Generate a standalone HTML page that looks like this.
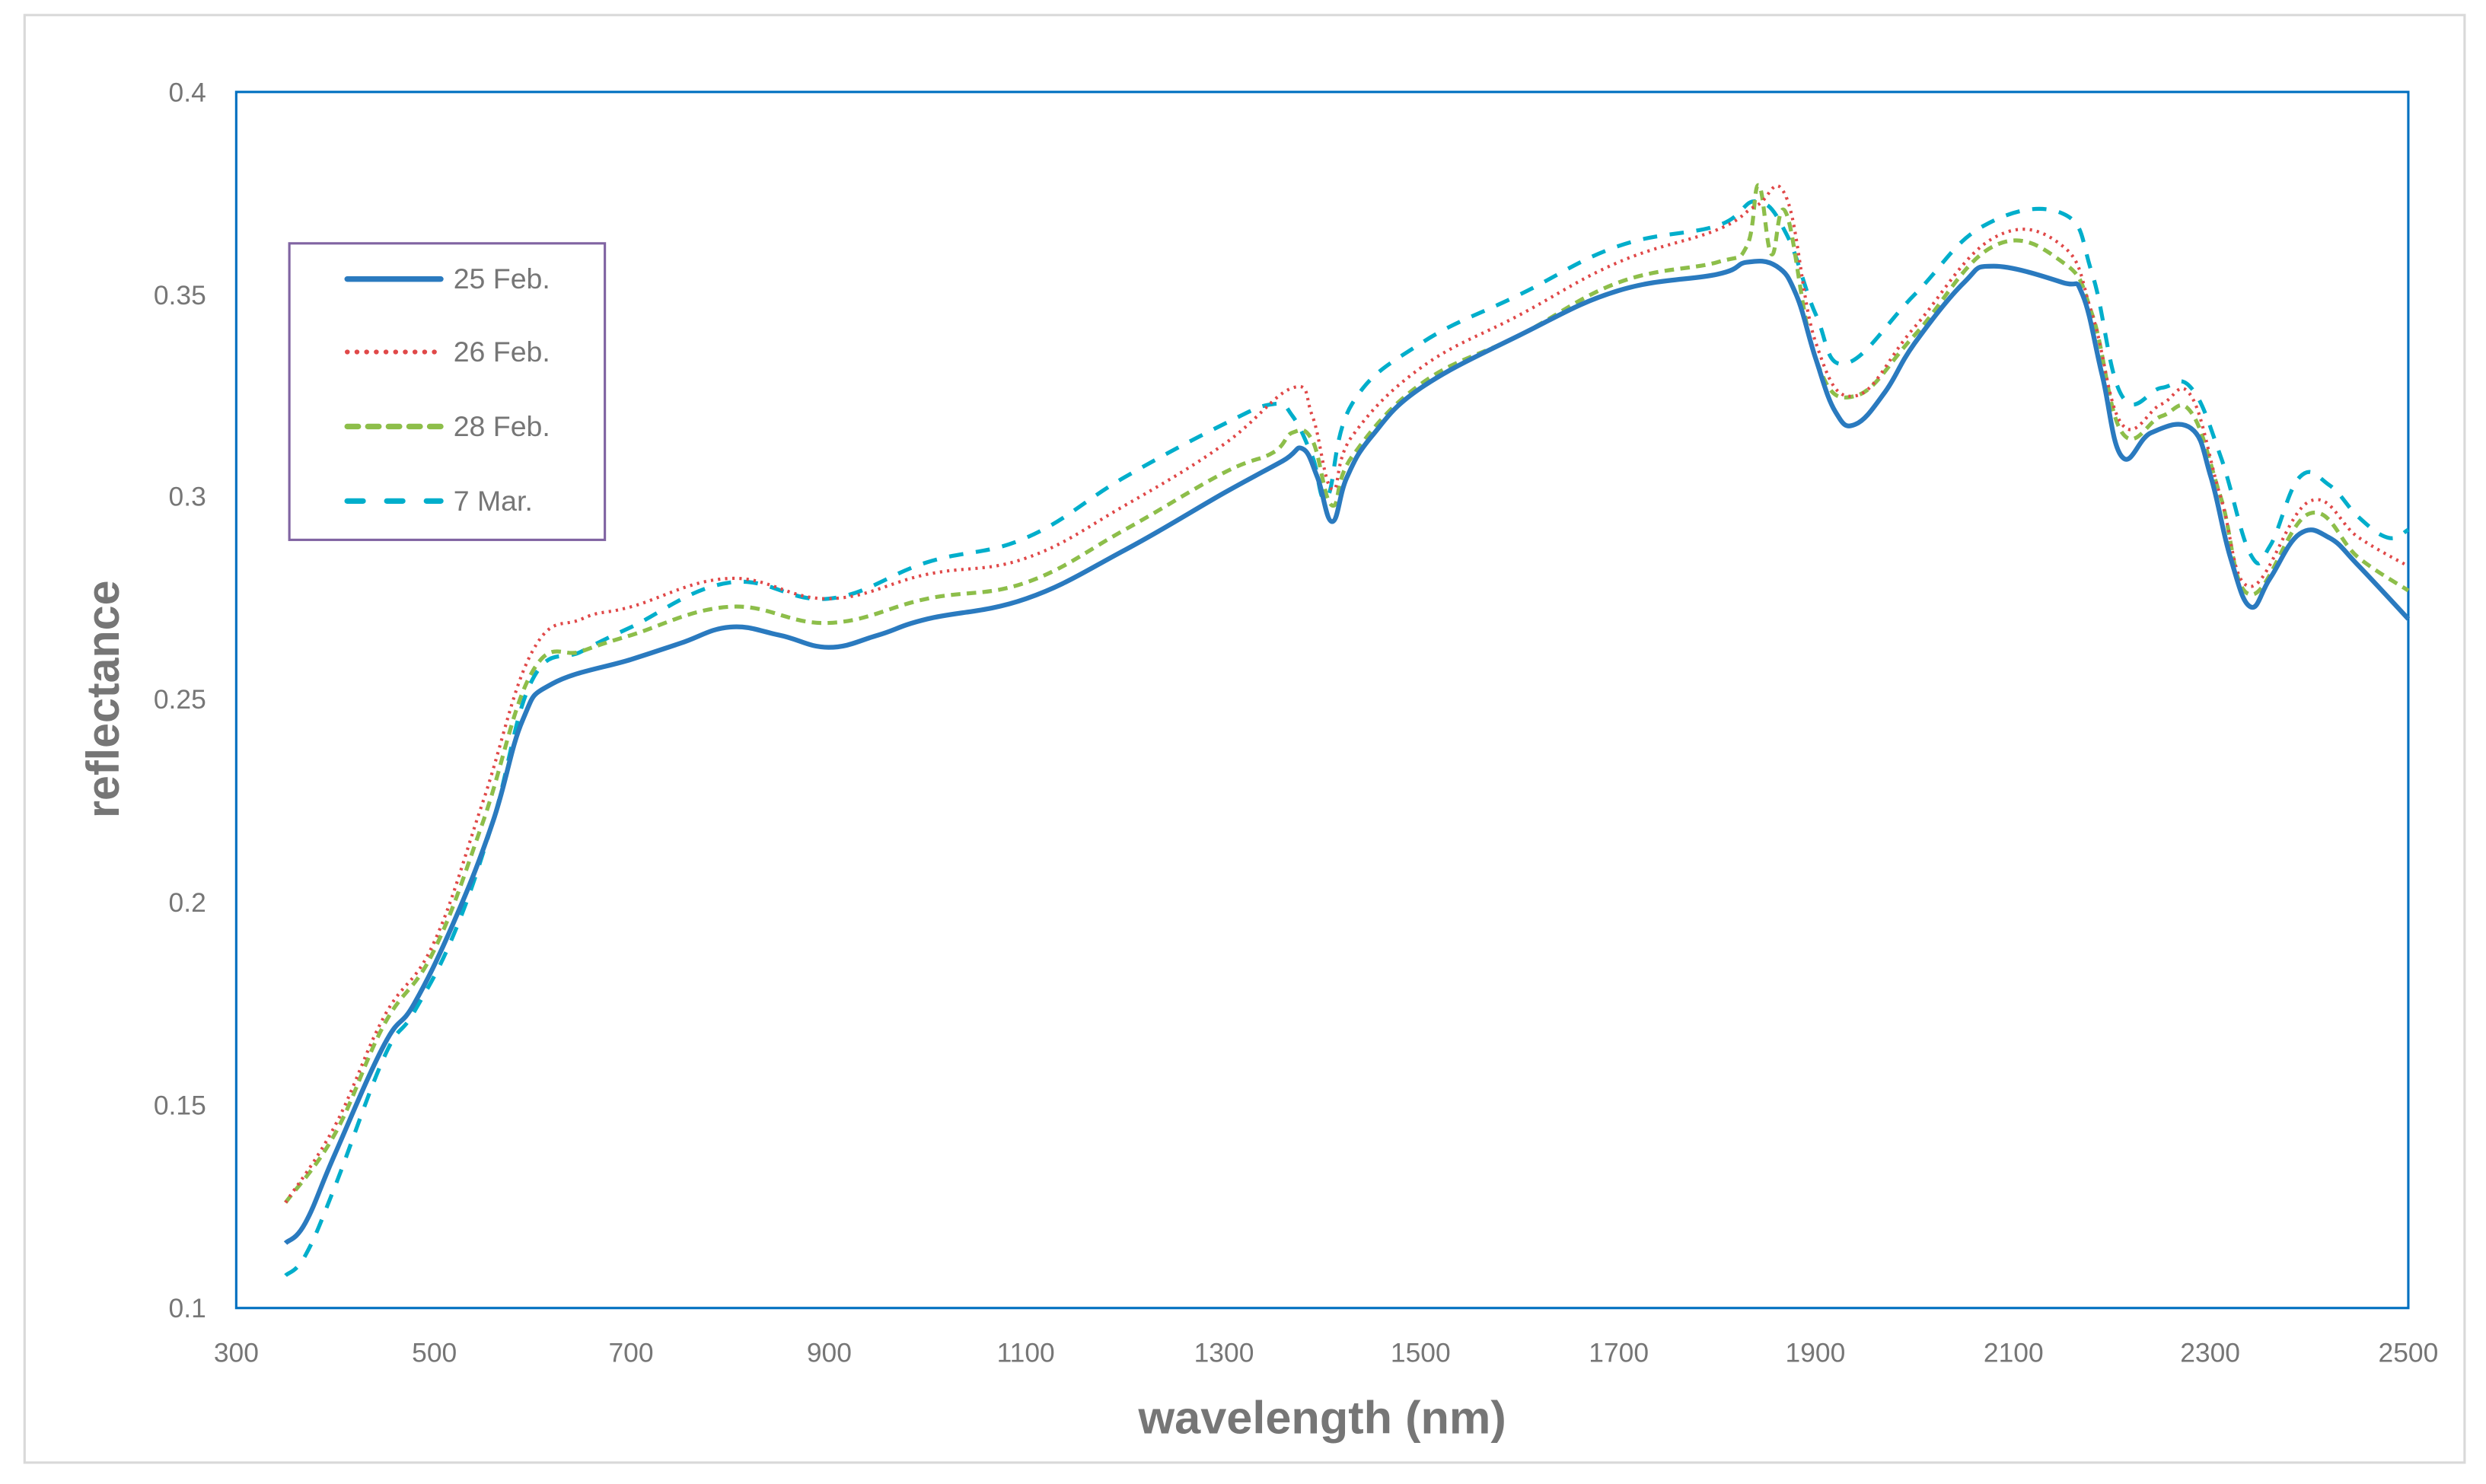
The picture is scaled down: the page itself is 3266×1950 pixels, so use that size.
<!DOCTYPE html>
<html><head><meta charset="utf-8"><style>
html,body{margin:0;padding:0;background:#fff;}
svg{display:block;}
text{font-family:"Liberation Sans",sans-serif;fill:#767676;}
</style></head><body>
<svg id="s" width="3266" height="1950" viewBox="0 0 1568 936" preserveAspectRatio="none">
<rect x="0" y="0" width="1568" height="936" fill="#fff"/>
<rect x="15.5" y="9.5" width="1539" height="913" fill="none" stroke="#d9d9d9" stroke-width="1.5"/>
<rect x="149" y="58" width="1370" height="767" fill="none" stroke="#0070c0" stroke-width="1.5"/>
<g font-size="17" text-anchor="end">
<text x="130" y="64">0.4</text>
<text x="130" y="192">0.35</text>
<text x="130" y="319">0.3</text>
<text x="130" y="447">0.25</text>
<text x="130" y="575">0.2</text>
<text x="130" y="703">0.15</text>
<text x="130" y="831">0.1</text>
</g>
<g font-size="17" text-anchor="middle">
<text x="149" y="859">300</text>
<text x="274" y="859">500</text>
<text x="398" y="859">700</text>
<text x="523" y="859">900</text>
<text x="647" y="859">1100</text>
<text x="772" y="859">1300</text>
<text x="896" y="859">1500</text>
<text x="1021" y="859">1700</text>
<text x="1145" y="859">1900</text>
<text x="1270" y="859">2100</text>
<text x="1394" y="859">2300</text>
<text x="1519" y="859">2500</text>
</g>
<text x="834" y="904" font-size="29" font-weight="bold" text-anchor="middle" textLength="232" lengthAdjust="spacingAndGlyphs">wavelength (nm)</text>
<text transform="translate(75,441) rotate(-90)" font-size="29" font-weight="bold" text-anchor="middle" textLength="150" lengthAdjust="spacingAndGlyphs">reflectance</text>
<g id="curves" fill="none" stroke-linejoin="round"></g>
<rect x="182.5" y="153.5" width="199" height="187" fill="#fff" stroke="#8064a2" stroke-width="1.5"/>
<line x1="219" y1="176" x2="278" y2="176" stroke="#2a7abf" stroke-width="3.5" stroke-linecap="round"/>
<line x1="219" y1="222" x2="278" y2="222" stroke="#e04848" stroke-width="3" stroke-dasharray="0.1 6" stroke-linecap="round"/>
<line x1="219" y1="269" x2="278" y2="269" stroke="#8dbe4a" stroke-width="3.5" stroke-dasharray="7 6" stroke-linecap="round"/>
<line x1="219" y1="316" x2="278" y2="316" stroke="#00aecb" stroke-width="3.5" stroke-dasharray="10 15" stroke-linecap="round"/>
<g font-size="18">
<text x="286" y="182">25 Feb.</text>
<text x="286" y="228">26 Feb.</text>
<text x="286" y="275">28 Feb.</text>
<text x="286" y="322">7 Mar.</text>
</g>
</svg>
<script>
function X(n){return 149+(n-300)*1370/2200;}
function Y(r){return 825-(r-0.1)*767/0.3;}
var S=[
["#00aecb",2.5,"9 8",[350,.108,370,.113,400,.13,450,.162,480,.173,520,.192,560,.22,600,.255,650,.262,700,.268,800,.279,900,.275,1000,.284,1100,.29,1200,.305,1300,.318,1350,.323,1370,.32,1390,.31,1405,.3,1430,.323,1500,.338,1600,.35,1700,.362,1800,.367,1840,.373,1870,.365,1900,.345,1930,.333,2000,.35,2070,.367,2150,.37,2180,.355,2210,.325,2250,.327,2280,.327,2310,.31,2340,.286,2360,.288,2390,.305,2420,.303,2450,.295,2480,.29,2500,.292]],
["#8dbe4a",2.5,"6 4",[350,.126,400,.143,450,.17,500,.188,550,.22,600,.257,650,.262,700,.266,800,.273,900,.269,1000,.275,1100,.279,1200,.292,1300,.306,1350,.311,1370,.316,1390,.314,1410,.298,1430,.31,1500,.328,1600,.34,1700,.353,1800,.358,1830,.362,1842,.377,1855,.36,1870,.37,1900,.334,1940,.325,2000,.34,2080,.362,2150,.358,2180,.345,2210,.316,2250,.32,2280,.321,2310,.3,2340,.276,2400,.296,2450,.285,2500,.277]],
["#e04848",2,"1.5 3",[350,.126,400,.145,450,.172,500,.19,550,.225,600,.262,650,.27,700,.273,800,.28,900,.275,1000,.281,1100,.285,1200,.298,1300,.313,1370,.327,1390,.32,1410,.302,1430,.315,1500,.332,1600,.345,1700,.358,1800,.366,1840,.372,1870,.374,1900,.338,1940,.325,2000,.342,2080,.364,2150,.362,2180,.345,2210,.318,2250,.323,2280,.325,2310,.3,2340,.278,2400,.299,2450,.29,2500,.283]],
["#2a7abf",3,"",[350,.116,370,.121,400,.138,450,.165,480,.175,520,.195,560,.22,590,.245,620,.254,700,.26,750,.264,800,.268,850,.266,900,.263,950,.266,1000,.27,1100,.275,1200,.287,1300,.301,1360,.309,1380,.312,1395,.305,1410,.294,1425,.305,1450,.315,1500,.327,1600,.34,1700,.351,1800,.355,1830,.358,1860,.357,1880,.35,1900,.334,1920,.321,1940,.318,1970,.326,2000,.338,2050,.353,2080,.357,2150,.353,2170,.35,2190,.33,2210,.31,2240,.316,2280,.317,2300,.305,2320,.285,2340,.273,2360,.28,2390,.291,2420,.29,2450,.283,2500,.27]]
];
var g=document.getElementById('curves'),ns="http://www.w3.org/2000/svg";
S.forEach(function(s){var p=s[3],P=[];for(var i=0;i<p.length;i+=2)P.push([X(p[i]),Y(p[i+1])]);
var d="M"+P[0][0].toFixed(1)+" "+P[0][1].toFixed(1),t=0.4;
for(var i=0;i<P.length-1;i++){var a=P[Math.max(i-1,0)],b=P[i],c=P[i+1],e=P[Math.min(i+2,P.length-1)];
var c1x=b[0]+(c[0]-a[0])*t/2,c1y=b[1]+(c[1]-a[1])*t/2,c2x=c[0]-(e[0]-b[0])*t/2,c2y=c[1]-(e[1]-b[1])*t/2;
d+="C"+c1x.toFixed(1)+" "+c1y.toFixed(1)+" "+c2x.toFixed(1)+" "+c2y.toFixed(1)+" "+c[0].toFixed(1)+" "+c[1].toFixed(1);}
var el=document.createElementNS(ns,"path");el.setAttribute("d",d);el.setAttribute("stroke",s[0]);el.setAttribute("stroke-width",s[1]);if(s[2])el.setAttribute("stroke-dasharray",s[2]);g.appendChild(el);});
</script>
</body></html>
